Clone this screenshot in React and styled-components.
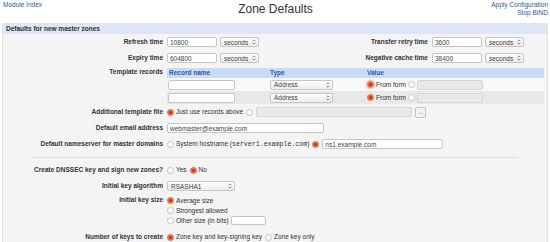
import React from 'react';
import styled, { createGlobalStyle } from 'styled-components';

const GlobalStyle = createGlobalStyle`
  body {
    margin: 0;
    background: #fff;
    font-family: "Liberation Sans", Arial, sans-serif;
    font-size: 6.5px;
    color: #333;
  }
`;

const Page = styled.div`
  width: 550px;
  height: 242px;
  overflow: hidden;
`;

const TopBar = styled.div`
  display: grid;
  grid-template-columns: 1fr auto 1fr;
  align-items: start;
  height: 23px;
  padding: 0 2px 0 3px;
`;

const LinkCol = styled.div`
  display: flex;
  flex-direction: column;
  align-items: ${p => (p.$right ? 'flex-end' : 'flex-start')};
  padding-top: 1px;
`;

const Link = styled.a`
  color: #2b5aa8;
  text-decoration: none;
  line-height: 8px;
`;

const Title = styled.h1`
  margin: 0;
  padding-top: 2px;
  font-size: 12px;
  line-height: 14px;
  font-weight: normal;
  color: #333;
`;

const Panel = styled.div`
  margin: 0 2px;
  height: 230px;
  background: #f4f4f4;
  border: 1px solid #e3e3e3;
`;

const PanelHead = styled.div`
  height: 10px;
  line-height: 10px;
  padding-left: 3px;
  background: #dbe6f6;
  font-weight: bold;
  color: #333;
`;

const Row = styled.div`
  display: grid;
  grid-template-columns: ${p => (p.$split ? '160px 96px 161px 1fr' : '160px 1fr')};
  column-gap: 4px;
  align-items: ${p => (p.$top ? 'start' : 'center')};
  min-height: 16px;
  padding: ${p => p.$pad || '0'};
`;

const Label = styled.div`
  text-align: right;
  font-weight: bold;
  line-height: 10px;
  white-space: nowrap;
  padding-top: ${p => p.$pt || 0}px;
`;

const Field = styled.div`
  display: flex;
  align-items: center;
  gap: 3px;
`;

const Input = styled.input`
  box-sizing: border-box;
  width: ${p => p.$w}px;
  height: ${p => p.$h || 10}px;
  padding: 0 2px;
  border: 1px solid ${p => (p.disabled ? '#d6d6d6' : '#c6c6c6')};
  border-radius: 2px;
  background: ${p => (p.disabled ? '#e8e8e8' : '#fff')};
  font-family: "Liberation Sans", Arial, sans-serif;
  font-size: 6.5px;
  color: #444;
  outline: none;
`;

const SelectBox = styled.div`
  box-sizing: border-box;
  width: ${p => p.$w}px;
  height: 10px;
  display: flex;
  align-items: center;
  justify-content: space-between;
  padding: 0 2px 0 3px;
  border: 1px solid #c6c6c6;
  border-radius: 2px;
  background: linear-gradient(#fdfdfd, #ececec);
  color: #444;
  white-space: nowrap;
`;

const Select = ({ w, children }) => (
  <SelectBox $w={w}>
    <span>{children}</span>
    <svg width="4" height="6" viewBox="0 0 4 6">
      <path d="M0.6 2.2 L2 0.8 L3.4 2.2 M0.6 3.8 L2 5.2 L3.4 3.8" fill="none" stroke="#555" strokeWidth="0.7" />
    </svg>
  </SelectBox>
);

const Radio = styled.span`
  box-sizing: border-box;
  flex: none;
  width: 7px;
  height: 7px;
  border-radius: 50%;
  border: 1px solid ${p => (p.$on ? '#e0633a' : '#c2c2c2')};
  background: ${p =>
    p.$on ? 'radial-gradient(circle, #b8361a 0 1.2px, #f07a52 1.8px)' : '#fff'};
  box-shadow: ${p => (p.$focus ? '0 0 0 1.5px #f6cdb9' : 'none')};
`;

const Opt = styled.span`
  display: inline-flex;
  align-items: center;
  gap: 2px;
  white-space: nowrap;
  line-height: 10px;
`;

const Mono = styled.span`
  font-family: "Liberation Mono", "Courier New", monospace;
  font-size: 6.6px;
`;

const Dots = styled.button`
  box-sizing: border-box;
  width: 11px;
  height: 11px;
  padding: 0;
  border: 1px solid #c4c4c4;
  border-radius: 2px;
  background: #f2f2f2;
  font-size: 6px;
  line-height: 6px;
  color: #444;
`;

const RecTable = styled.div`
  margin: 2px 3px 0 0;
`;

const RecRow = styled.div`
  display: grid;
  grid-template-columns: 101px 97px 1fr;
  align-items: center;
  height: ${p => (p.$head ? 10 : 13)}px;
  background: ${p => (p.$head ? '#c9dcf7' : p.$alt ? '#e8e8e8' : '#f8f8f8')};
`;

const Cell = styled.div`
  display: flex;
  align-items: center;
  gap: 2px;
  padding-left: ${p => p.$pl ?? 2}px;
`;

const HeadCell = styled.div`
  padding-left: 2px;
  font-weight: bold;
  color: #2a5aaa;
  line-height: 10px;
`;

const Divider = styled.div`
  margin: 5px 29px 3px;
  height: 1px;
  border-top: 1px solid #e0e0e0;
`;

const Stack = styled.div`
  display: flex;
  flex-direction: column;
  align-items: flex-start;
`;

const OptLine = styled.div`
  display: flex;
  align-items: center;
  gap: 2px;
  height: ${p => p.$h || 10}px;
`;

const TemplateRow = ({ alt, focus }) => (
  <RecRow $alt={alt}>
    <Cell $pl={1}><Input $w={67} /></Cell>
    <Cell><Select w={63}>Address</Select></Cell>
    <Cell>
      <Opt><Radio $on $focus={focus} />From form</Opt>
      <Radio />
      <Input $w={66} disabled />
    </Cell>
  </RecRow>
);

export default function App() {
  return (
    <Page>
      <GlobalStyle />
      <TopBar>
        <LinkCol>
          <Link href="#">Module Index</Link>
        </LinkCol>
        <Title>Zone Defaults</Title>
        <LinkCol $right>
          <Link href="#">Apply Configuration</Link>
          <Link href="#">Stop BIND</Link>
        </LinkCol>
      </TopBar>
      <Panel>
        <PanelHead>Defaults for new master zones</PanelHead>
        <Row $split>
          <Label>Refresh time</Label>
          <Field><Input $w={50} defaultValue="10800" /><Select w={39}>seconds</Select></Field>
          <Label>Transfer retry time</Label>
          <Field><Input $w={50} defaultValue="3600" /><Select w={39}>seconds</Select></Field>
        </Row>
        <Row $split>
          <Label>Expiry time</Label>
          <Field><Input $w={50} defaultValue="604800" /><Select w={39}>seconds</Select></Field>
          <Label>Negative cache time</Label>
          <Field><Input $w={50} defaultValue="38400" /><Select w={39}>seconds</Select></Field>
        </Row>
        <Row $top>
          <Label $pt={1}>Template records</Label>
          <RecTable>
            <RecRow $head>
              <HeadCell>Record name</HeadCell>
              <HeadCell>Type</HeadCell>
              <HeadCell>Value</HeadCell>
            </RecRow>
            <TemplateRow focus />
            <TemplateRow alt />
          </RecTable>
        </Row>
        <Row>
          <Label>Additional template file</Label>
          <Field>
            <Opt><Radio $on />Just use records above</Opt>
            <Radio />
            <Input $w={156} disabled />
            <Dots>...</Dots>
          </Field>
        </Row>
        <Row>
          <Label>Default email address</Label>
          <Field><Input $w={157} defaultValue="webmaster@example.com" /></Field>
        </Row>
        <Row>
          <Label>Default nameserver for master domains</Label>
          <Field>
            <Opt>
              <Radio />
              <span>System hostname (<Mono>server1.example.com</Mono>)</span>
            </Opt>
            <Radio $on />
            <Input $w={121} defaultValue="ns1.example.com" />
          </Field>
        </Row>
        <Divider />
        <Row>
          <Label>Create DNSSEC key and sign new zones?</Label>
          <Field>
            <Opt><Radio />Yes</Opt>
            <Opt><Radio $on />No</Opt>
          </Field>
        </Row>
        <Row>
          <Label>Initial key algorithm</Label>
          <Field><Select w={68}>RSASHA1</Select></Field>
        </Row>
        <Row $top $pad="1px 0 3px">
          <Label>Initial key size</Label>
          <Stack>
            <OptLine><Radio $on />Average size</OptLine>
            <OptLine><Radio />Strongest allowed</OptLine>
            <OptLine $h={11}><Radio />Other size (in bits)<Input $w={35} $h={9} /></OptLine>
          </Stack>
        </Row>
        <Row>
          <Label>Number of keys to create</Label>
          <Field>
            <Opt><Radio $on />Zone key and key-signing key</Opt>
            <Opt><Radio />Zone key only</Opt>
          </Field>
        </Row>
      </Panel>
    </Page>
  );
}
